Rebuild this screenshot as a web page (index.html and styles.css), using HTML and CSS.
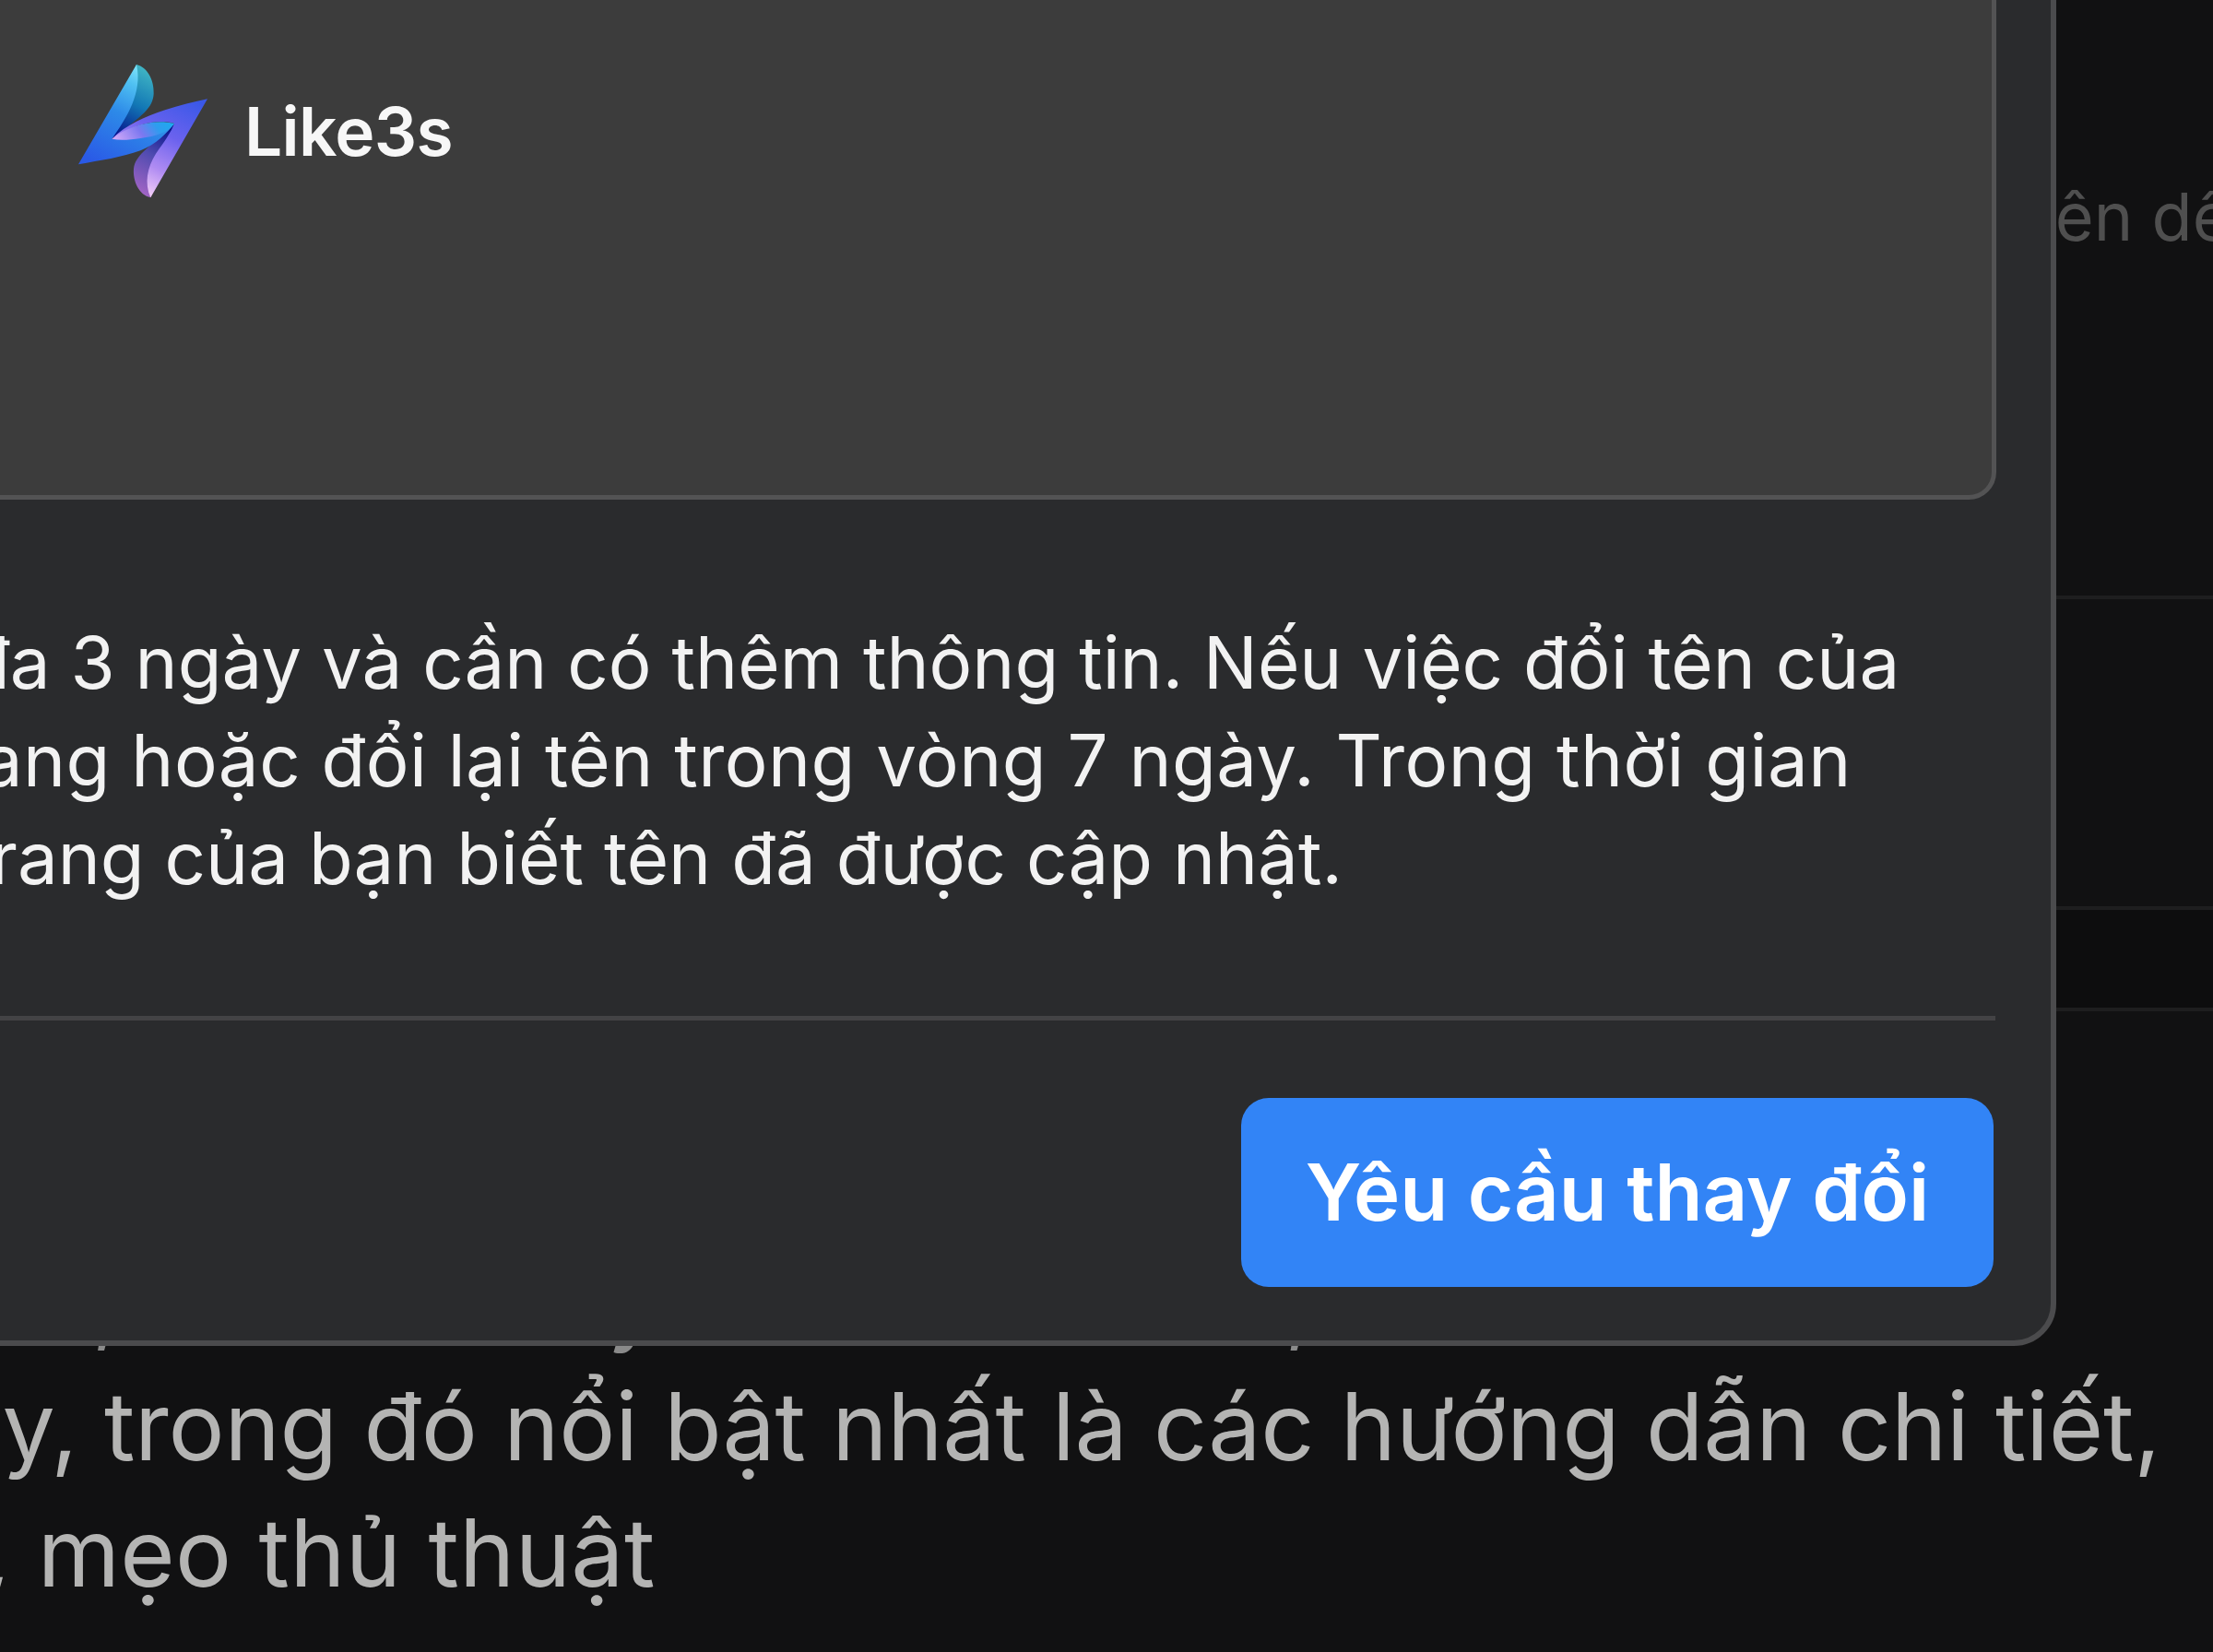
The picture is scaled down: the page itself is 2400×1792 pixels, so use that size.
FILE: index.html
```html
<!DOCTYPE html>
<html lang="vi">
<head>
<meta charset="utf-8">
<title>Like3s</title>
<link rel="stylesheet" href="styles.css">
</head>
<body>
<main class="page">
  <div class="bg-name">tên dế</div>
  <hr class="bg-rule">
  <div class="bg-band"></div>
  <p class="bg-hidden-line">ên, hữu ích hay về tin tức mới, và mới</p>
  <p class="bg-copy bg-copy-a">ny, trong đó nổi bật nhất là các hướng dẫn chi tiết,</p>
  <p class="bg-copy bg-copy-b">, mẹo thủ thuật</p>
</main>
<section class="modal">
  <div class="card">
    <svg class="logo" viewBox="0 0 510 510" aria-hidden="true">
      <defs>
        <linearGradient id="gTeal" x1="0.6" y1="0" x2="0.3" y2="1">
          <stop offset="0" stop-color="#3fb4c4"/><stop offset="0.5" stop-color="#1277b5"/><stop offset="1" stop-color="#06128c"/>
        </linearGradient>
        <linearGradient id="gLeft" x1="0.72" y1="0" x2="0.22" y2="1">
          <stop offset="0" stop-color="#8ff0fc"/><stop offset="0.22" stop-color="#4fc0f2"/><stop offset="0.5" stop-color="#2d8ae8"/><stop offset="1" stop-color="#2a5ae6"/>
        </linearGradient>
        <linearGradient id="gRight" x1="0.85" y1="0" x2="0.35" y2="1">
          <stop offset="0" stop-color="#3a58e8"/><stop offset="0.4" stop-color="#6b62ee"/><stop offset="0.72" stop-color="#b08cf2"/><stop offset="1" stop-color="#fbd5f8"/>
        </linearGradient>
        <linearGradient id="gBack" x1="0.7" y1="0" x2="0.4" y2="1">
          <stop offset="0" stop-color="#06128c"/><stop offset="0.45" stop-color="#4f4bb0"/><stop offset="1" stop-color="#a064c4"/>
        </linearGradient>
        <linearGradient id="gFold" x1="0" y1="0.6" x2="1" y2="0.4">
          <stop offset="0" stop-color="#cda6f8"/><stop offset="0.45" stop-color="#7c78f0"/><stop offset="0.75" stop-color="#2f9cef"/><stop offset="1" stop-color="#1fa8ef"/>
        </linearGradient>
      </defs>
      <path fill="url(#gTeal)" d="M237 30C272 38 295 80 293 125C290 170 262 192 157 272L210 150Z"/>
      <path fill="url(#gBack)" d="M283 463C245 455 225 410 228 370C232 322 290 292 360 222L320 340Z"/>
      <path fill="url(#gLeft)" d="M237 30L48 355C120 342 190 332 250 310C300 290 335 255 360 222L157 272C205 205 258 120 237 30Z"/>
      <path fill="url(#gRight)" d="M468 142L283 463C262 415 272 365 300 320C325 285 350 250 360 222C305 205 225 225 157 272C205 225 265 200 330 178C375 163 425 152 468 142Z"/>
      <path fill="url(#gFold)" d="M157 272C205 232 290 205 360 222C340 250 300 264 250 270C215 275 185 278 157 272Z"/>
    </svg>
    <span class="brand">Like3s</span>
  </div>
  <div class="notice">
    <p class="notice-line notice-line-a">đa 3 ngày và cần có thêm thông tin. Nếu việc đổi tên của</p>
    <p class="notice-line notice-line-b">trang hoặc đổi lại tên trong vòng 7 ngày. Trong thời gian</p>
    <p class="notice-line notice-line-c">trang của bạn biết tên đã được cập nhật.</p>
  </div>
  <hr class="divider">
  <div class="actions">
    <button class="primary" type="button">Yêu cầu thay đổi</button>
  </div>
</section>
</body>
</html>
```
FILE: styles.css
```css
* { box-sizing: border-box; }
html, body { margin: 0; padding: 0; }
body {
  width: 2400px;
  height: 1792px;
  overflow: hidden;
  position: relative;
  background: #111112;
  font-family: Inter, "Liberation Sans", sans-serif;
}
.page { display: flex; flex-direction: column; height: 100%; }
.bg-name {
  flex: none;
  margin: 185px 0 0 2206px;
  font-size: 72px;
  line-height: 100px;
  white-space: nowrap;
  color: #4f4f4f;
}
.bg-rule {
  flex: none;
  margin: 361px 0 0;
  border: 0;
  height: 4px;
  background: #1e1e1f;
}
.bg-band {
  flex: none;
  height: 114px;
  margin-top: 333px;
  border-top: 4px solid #1e1e1f;
  border-bottom: 4px solid #1e1e1f;
  background: #0d0d0e;
}
.bg-hidden-line {
  flex: none;
  margin: 245px 0 0 -20px;
  font-size: 102px;
  line-height: 137px;
  white-space: nowrap;
  color: #8a8a8a;
}
.bg-copy {
  flex: none;
  margin: 0;
  font-size: 102px;
  line-height: 137px;
  white-space: nowrap;
  color: #b4b4b3;
}
.bg-copy-a { margin-left: -56px; letter-spacing: -0.2px; }
.bg-copy-b { margin-left: -18px; letter-spacing: 0.3px; }

.modal {
  position: absolute;
  left: -100px;
  top: -100px;
  width: 2330px;
  height: 1560px;
  display: flex;
  flex-direction: column;
  padding: 50px 60px 58px 50px;
  background: #2a2b2d;
  border: 6px solid #4b4b4d;
  border-radius: 46px;
}
.card {
  flex: none;
  height: 586px;
  margin-right: -1px;
  display: flex;
  align-items: flex-start;
  gap: 26px;
  padding: 99px 0 0 108px;
  background: #3c3c3c;
  border: 5px solid #535354;
  border-radius: 30px;
}
.logo { width: 170px; height: 170px; flex: none; }
.brand {
  margin-top: 39px;
  font-size: 73px;
  line-height: 88px;
  font-weight: 600;
  letter-spacing: -0.7px;
  color: #f7f7f7;
}
.notice { flex: none; margin-top: 124px; color: #f2f2f2; }
.notice-line {
  margin: 0;
  font-size: 78px;
  line-height: 106px;
  white-space: nowrap;
}
.notice-line-a { margin-left: 7px; }
.notice-line-b { margin-left: -31px; letter-spacing: 0.46px; }
.notice-line-c { margin-left: 8px; }
.divider {
  flex: none;
  margin: 118px 0 0;
  border: 0;
  height: 5px;
  background: #434345;
}
.actions { flex: none; display: flex; justify-content: flex-end; margin-top: 84px; padding-right: 2px; }
.primary {
  width: 816px;
  height: 205px;
  border: 0;
  border-radius: 30px;
  background: #3284f6;
  color: #fff;
  font-family: inherit;
  font-size: 85px;
  font-weight: 600;
}
```
